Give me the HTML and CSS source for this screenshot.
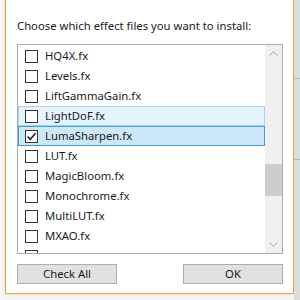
FILE: index.html
```html
<!DOCTYPE html>
<html>
<head>
<meta charset="utf-8">
<link rel="stylesheet" href="styles.css">
</head>
<body>
<div class="screen">
  <div class="side-left"></div>
  <div class="dialog">
    <p class="prompt">Choose which effect files you want to install:</p>
    <div class="listbox">
      <div class="rows">
        <div class="row"><span class="box"></span><span class="label">HQ4X.fx</span></div>
        <div class="row"><span class="box"></span><span class="label">Levels.fx</span></div>
        <div class="row"><span class="box"></span><span class="label">LiftGammaGain.fx</span></div>
        <div class="row hover"><span class="box"></span><span class="label">LightDoF.fx</span></div>
        <div class="row selected"><span class="box"><svg viewBox="0 0 11 11" width="11" height="11"><path d="M1.6 5.6 L4.2 8.3 L9.6 2.2" fill="none" stroke="#1a1a1a" stroke-width="1.5"/></svg></span><span class="label">LumaSharpen.fx</span></div>
        <div class="row"><span class="box"></span><span class="label">LUT.fx</span></div>
        <div class="row"><span class="box"></span><span class="label">MagicBloom.fx</span></div>
        <div class="row"><span class="box"></span><span class="label">Monochrome.fx</span></div>
        <div class="row"><span class="box"></span><span class="label">MultiLUT.fx</span></div>
        <div class="row"><span class="box"></span><span class="label">MXAO.fx</span></div>
        <div class="row"><span class="box"></span></div>
      </div>
      <div class="scrollbar">
        <div class="arrow"><svg viewBox="0 0 9 5" width="9" height="5"><path d="M0.5 4.5 L4.5 0.8 L8.5 4.5" fill="none" stroke="#a3a3a3" stroke-width="1"/></svg></div>
        <div class="track"><div class="thumb"></div></div>
        <div class="arrow"><svg viewBox="0 0 9 5" width="9" height="5"><path d="M0.5 0.5 L4.5 4.2 L8.5 0.5" fill="none" stroke="#a3a3a3" stroke-width="1"/></svg></div>
      </div>
    </div>
    <div class="buttons">
      <button class="btn">Check All</button>
      <button class="btn">OK</button>
    </div>
  </div>
  <div class="side-right"><div class="rline l1"></div><div class="rline l2"></div></div>
</div>
</body>
</html>
```
FILE: styles.css
```css
html, body {
  margin: 0;
  padding: 0;
  width: 300px;
  height: 300px;
  overflow: hidden;
  background: #f6f4f0;
  font-family: "Noto Sans", "Open Sans", sans-serif;
  font-size: 11.3px;
  color: #1a1a1a;
}
.screen {
  display: flex;
  height: 300px;
}
.side-left {
  width: 5px;
  flex: none;
  background: #f7f7f7;
}
.dialog {
  flex: none;
  width: 289px;
  height: 295px;
  margin-top: -1px;
  border: 1px solid #e9a640;
  box-shadow: 0 0 2px rgba(233, 166, 64, 0.6);
  background: #ffffff;
  padding: 0 0 0 11px;
  box-sizing: border-box;
  display: flex;
  flex-direction: column;
}
.prompt {
  margin: 0;
  padding-top: 18px;
  height: 26px;
  line-height: 16px;
  color: #1a1a1a;
}
.listbox {
  width: 266px;
  height: 210px;
  border: 1px solid #ababab;
  box-sizing: border-box;
  display: flex;
  overflow: hidden;
}
.rows {
  flex: 1;
  padding-top: 1px;
  overflow: hidden;
}
.row {
  height: 20px;
  box-sizing: border-box;
  display: flex;
  align-items: center;
  border: 1px solid transparent;
}
.row.hover {
  background: #e5f3fb;
  border-color: #a6d5f0;
}
.row.selected {
  background: #cce8f7;
  border-color: #3a9fd6;
}
.box {
  width: 13px;
  height: 13px;
  box-sizing: border-box;
  border: 1px solid #333333;
  background: #ffffff;
  margin-left: 6px;
  display: flex;
  align-items: center;
  justify-content: center;
  flex: none;
}
.label {
  margin-left: 7px;
  line-height: 16px;
  white-space: nowrap;
}
.scrollbar {
  width: 17px;
  flex: none;
  background: #f0f0f0;
  display: flex;
  flex-direction: column;
}
.arrow {
  height: 17px;
  display: flex;
  align-items: center;
  justify-content: center;
  flex: none;
}
.track {
  flex: 1;
}
.thumb {
  margin-top: 102px;
  height: 32px;
  background: #cdcdcd;
}
.buttons {
  display: flex;
  justify-content: space-between;
  width: 266px;
  margin-top: 10px;
}
.btn {
  width: 100px;
  height: 20px;
  padding: 0;
  margin: 0;
  border: 1px solid #adadad;
  background: #e1e1e1;
  font-family: "Noto Sans", "Open Sans", sans-serif;
  font-size: 11.3px;
  color: #1a1a1a;
  line-height: 16px;
}
.side-right {
  flex: 1;
  background: #dcdcdc;
  display: flex;
  flex-direction: column;
}
.rline {
  height: 1px;
  background: #b8b8b8;
}
.l1 { margin-top: 78px; }
.l2 { margin-top: 80px; }
```
